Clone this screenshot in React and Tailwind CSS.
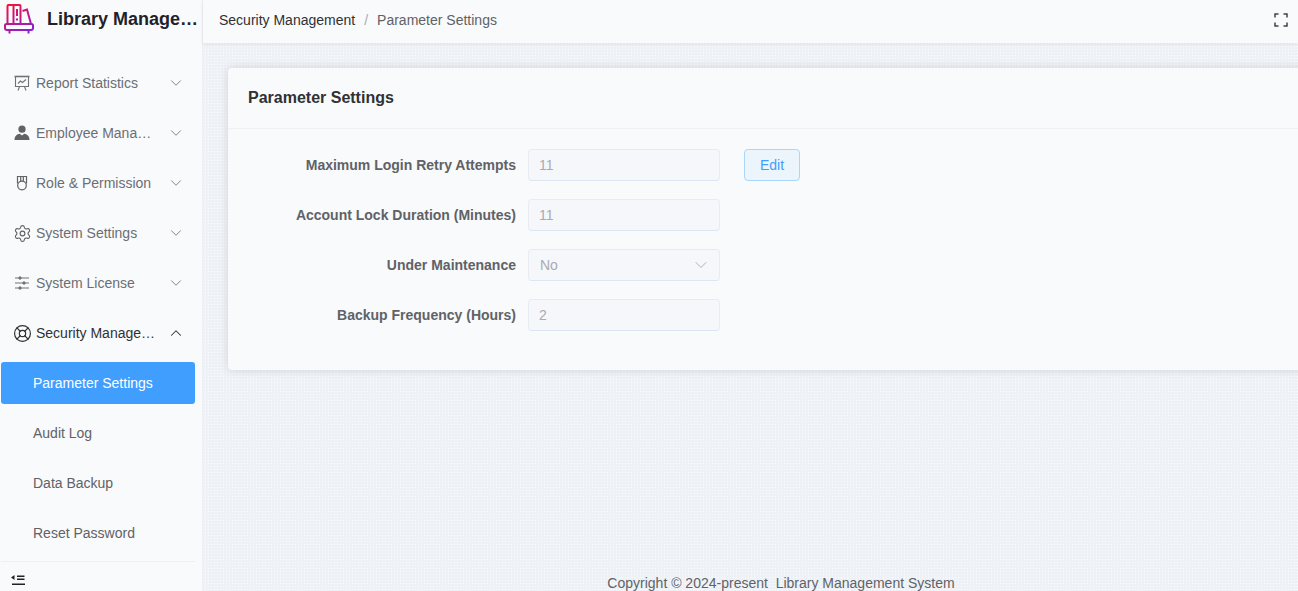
import React from 'react';
import { ChevronDown, ChevronUp, LifeBuoy, Settings } from 'lucide-react';

const ReportIcon = () => (
  <svg width="16" height="16" viewBox="0 0 16 16" fill="none" stroke="#707276" strokeWidth="1.1">
    <path d="M.5 1.500h15" strokeWidth="1.6" />
    <path d="M1.500 2v9.500h13V2" />
    <path d="M4 8.500l2.500-2.500 2 1.500L12 4.500" />
    <path d="M5.500 11.500L4 15.500M10.500 11.500l1.500 4" />
  </svg>
);

const PersonIcon = () => (
  <svg width="16" height="16" viewBox="0 0 16 16" fill="#606266">
    <circle cx="8" cy="4.200" r="3.600" />
    <path d="M.5 15c0-4 2.800-6 5.200-6.200L8 10.500l2.300-1.700C12.700 9 15.500 11 15.500 15z" />
  </svg>
);

const RoleIcon = () => (
  <svg width="16" height="16" viewBox="0 0 16 16" fill="none" stroke="#606266" strokeWidth="1.2">
    <circle cx="8" cy="10.500" r="4.300" />
    <path d="M3.500 8.500V1.500h9v7M6.700 1.500v5M9.300 1.500v5" />
  </svg>
);

const SlidersIcon = () => (
  <svg width="16" height="16" viewBox="0 0 16 16" fill="#707276" stroke="#707276">
    <path d="M1 3h14M1 8h14M1 13h14" strokeWidth="1" />
    <circle cx="6" cy="3" r="1.200" />
    <circle cx="10" cy="8" r="1.200" />
    <circle cx="6" cy="13" r="1.200" />
  </svg>
);

const CollapseIcon = () => (
  <svg width="14" height="12" viewBox="0 0 14 12" fill="#222">
    <path d="M3.500 1v5L0 3.500z" />
    <path d="M6 1.500h7.500v1.500H6zM6 4.500h7.500V6H6zM1 9.500h13V11H1z" />
  </svg>
);

const LogoIcon = () => (
  <svg width="30" height="30" viewBox="0 0 30 30" fill="none" stroke="url(#logoGrad)" strokeWidth="2" className="shrink-0">
    <defs>
      <linearGradient id="logoGrad" gradientUnits="userSpaceOnUse" x1="6" y1="0" x2="20" y2="30">
        <stop offset="0" stopColor="#f5103f" />
        <stop offset="1" stopColor="#8a1fd8" />
      </linearGradient>
    </defs>
    <path d="M3.500 20V2q0-1 1-1h11q1 0 1 1v18" />
    <path d="M9.500 1v19" />
    <path d="M13 5v7M13 14.500v2" />
    <path d="M18.500 7l4.500-1.500L27 20" />
    <path d="M1 21.500q0-1.500 1.500-1.500h25q1.500 0 1.500 1.500V24q0 2-2 2H3q-2 0-2-2z" />
    <path d="M5.500 26v3.500M24.500 26v3.500" />
  </svg>
);

const menus = [
  { label: 'Report Statistics', icon: <ReportIcon /> },
  { label: 'Employee Management', icon: <PersonIcon /> },
  { label: 'Role & Permission', icon: <RoleIcon /> },
  { label: 'System Settings', icon: <Settings size={19} strokeWidth={1.4} className="shrink-0" /> },
  { label: 'System License', icon: <SlidersIcon /> },
];

const subMenus = ['Parameter Settings', 'Audit Log', 'Data Backup', 'Reset Password'];

const Sidebar = () => (
  <aside className="w-[203px] h-full shrink-0 flex flex-col bg-[#f9fafc] border-r border-[#eef0f4]">
    <div className="h-[38px] shrink-0 flex items-center pl-[4px]">
      <LogoIcon />
      <span className="ml-[13px] w-[152px] truncate text-[18px] font-bold text-[#1f2329]">Library Management System</span>
    </div>
    <nav className="flex-1 min-h-0 overflow-hidden pt-[24px] pr-[7px]">
      {menus.map((m) => (
        <div key={m.label} className="h-[42px] mb-[8px] flex items-center pl-[14px] text-[#606266]">
          <span className="w-[16px] flex justify-center shrink-0">{m.icon}</span>
          <span className="ml-[6px] w-[121px] truncate text-sm text-[#6b6e73]">{m.label}</span>
          <ChevronDown size={18} strokeWidth={1.2} className="ml-[10px] shrink-0 text-[#777]" />
        </div>
      ))}
      <div className="h-[42px] mb-[8px] flex items-center pl-[14px] text-[#303133]">
        <span className="w-[16px] flex justify-center shrink-0">
          <LifeBuoy size={19} strokeWidth={1.5} className="shrink-0" />
        </span>
        <span className="ml-[6px] w-[121px] truncate text-sm">Security Management</span>
        <ChevronUp size={18} strokeWidth={1.4} className="ml-[10px] shrink-0" />
      </div>
      {subMenus.map((s, i) => (
        <div
          key={s}
          className={
            i === 0
              ? 'h-[42px] mb-[8px] ml-[1px] flex items-center pl-[32px] rounded-[3px] text-sm bg-[#409eff] text-white'
              : 'h-[42px] mb-[8px] ml-[1px] flex items-center pl-[32px] text-sm text-[#606266]'
          }
        >
          {s}
        </div>
      ))}
    </nav>
    <div className="h-[30px] shrink-0 mr-[7px] ml-[1px] border-t border-[#eef0f4] flex items-center pl-[10px] pt-[6px]">
      <CollapseIcon />
    </div>
  </aside>
);

const fieldClass =
  'w-[192px] h-[32px] pl-[10px] pr-[11px] flex items-center justify-between rounded-[4px] border border-[#e8ebf2] border-b-[#dde6f3] bg-[#f5f7fb] text-sm text-[#a8abb2]';

const Field = ({ label, children }) => (
  <div className="h-[32px] mb-[18px] flex items-center">
    <label className="w-[300px] pr-[12px] text-right text-sm font-bold text-[#606266]">{label}</label>
    {children}
  </div>
);

const SettingsCard = () => (
  <section className="mx-[25px] mt-[25px] h-[302px] rounded-[4px] bg-[#f9fafc] shadow-[0_0_10px_rgba(0,0,0,0.14)]">
    <div className="h-[61px] flex items-center px-[20px] border-b border-[#eef0f4]">
      <h2 className="text-base font-bold text-[#303133]">Parameter Settings</h2>
    </div>
    <div className="pt-[20px]">
      <Field label="Maximum Login Retry Attempts">
        <div className={fieldClass}>11</div>
        <button className="ml-[24px] w-[56px] h-[32px] rounded-[4px] border border-[#a9d6fb] bg-[#ecf5fb] text-sm text-[#409eff]">Edit</button>
      </Field>
      <Field label="Account Lock Duration (Minutes)">
        <div className={fieldClass}>11</div>
      </Field>
      <Field label="Under Maintenance">
        <div className={fieldClass}>
          <span className="ml-[1px]">No</span>
          <ChevronDown size={20} strokeWidth={1.1} className="-mr-[3px] text-[#a8abb2]" />
        </div>
      </Field>
      <Field label="Backup Frequency (Hours)">
        <div className={fieldClass}>2</div>
      </Field>
    </div>
  </section>
);

const App = () => (
  <div className="h-[591px] w-[1298px] flex overflow-hidden bg-[#eef2f7] bg-[radial-gradient(circle,#fbfcfe_1px,transparent_1px)] bg-[length:3px_3px] font-['Liberation_Sans',Arial,sans-serif]">
    <Sidebar />
    <div className="w-[1156px] shrink-0 h-full flex flex-col">
      <header className="h-[43px] w-[1095px] shrink-0 flex items-center justify-between pl-[16px] pr-[10px] pb-[4px] bg-[#f9fafc] shadow-[0_1px_4px_rgba(0,0,0,0.08)] text-sm">
        <div className="flex items-center">
          <span className="text-[#303133]">Security Management</span>
          <span className="mx-[9px] text-[#a8abb2]">/</span>
          <span className="text-[#606266]">Parameter Settings</span>
        </div>
        <svg width="14" height="14" viewBox="0 0 14 14" fill="none" stroke="#444" strokeWidth="1.500">
          <path d="M1 4.500V1h3.500M9.500 1H13v3.500M13 9.500V13H9.500M4.500 13H1V9.500" />
        </svg>
      </header>
      <main className="flex-1 min-h-0 flex flex-col">
        <SettingsCard />
        <footer className="mt-auto h-[16px] leading-[16px] text-center text-sm text-[#606266] whitespace-pre">Copyright © 2024-present  Library Management System</footer>
      </main>
    </div>
  </div>
);

export default App;
